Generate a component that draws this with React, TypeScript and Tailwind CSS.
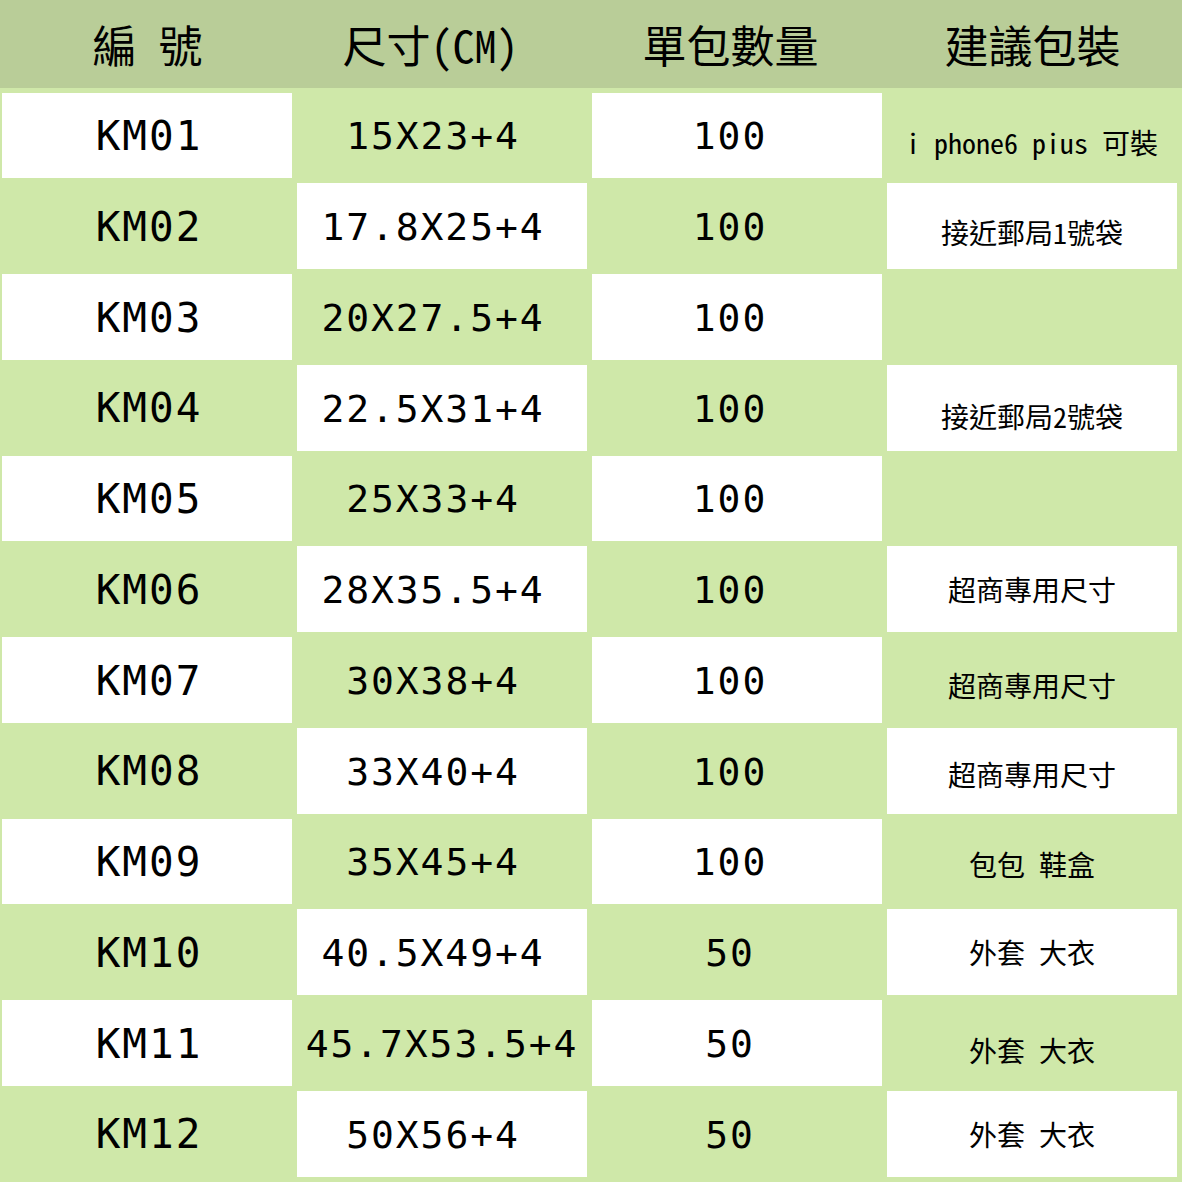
import React from 'react';

const rows: [string, string, string, string][] = [
  ['KM01', '15X23+4', '100', 'i phone6 pius 可裝'],
  ['KM02', '17.8X25+4', '100', '接近郵局1號袋'],
  ['KM03', '20X27.5+4', '100', ''],
  ['KM04', '22.5X31+4', '100', '接近郵局2號袋'],
  ['KM05', '25X33+4', '100', ''],
  ['KM06', '28X35.5+4', '100', '超商專用尺寸'],
  ['KM07', '30X38+4', '100', '超商專用尺寸'],
  ['KM08', '33X40+4', '100', '超商專用尺寸'],
  ['KM09', '35X45+4', '100', '包包 鞋盒'],
  ['KM10', '40.5X49+4', '50', '外套 大衣'],
  ['KM11', '45.7X53.5+4', '50', '外套 大衣'],
  ['KM12', '50X56+4', '50', '外套 大衣'],
];

// the last column's text sits a little low in some rows
const notePad = [
  'pt-[14px]',
  'pt-[12px]',
  '',
  'pt-[16px]',
  '',
  '',
  'pt-[10px]',
  'pt-[6px]',
  'pt-[6px]',
  '',
  'pt-[14px]',
  '',
];

const headers = ['編 號', '尺寸(CM)', '單包數量', '建議包裝'];

const code = "font-['DejaVu_Sans_Mono','Liberation_Mono',monospace] text-[41px] tracking-[2px] pl-[4px] pt-[3px]";
const mono = "font-['DejaVu_Sans_Mono','Liberation_Mono',monospace] text-[38px] tracking-[1.9px] pt-[3px]";
const cjk = "font-['Noto_Sans_Mono_CJK_TC','Noto_Sans_CJK_TC',sans-serif] text-[28px]";

export default function App() {
  return (
    <div className="w-[1182px] h-[1182px] bg-[#cfe8a9] text-black overflow-hidden">
      {/* header */}
      <div className="h-[88px] bg-[#b9cd98] grid grid-cols-[repeat(4,295px)]">
        {headers.map((h, j) => (
          <div
            key={h}
            className={`flex items-center justify-center font-['Noto_Sans_Mono_CJK_TC','Noto_Sans_CJK_TC',sans-serif] text-[44px] font-medium whitespace-pre ${
              j === 1 ? 'pr-[24px]' : j === 2 ? 'pr-[14px]' : ''
            }`}
          >
            {h}
          </div>
        ))}
      </div>

      {/* body */}
      <div className="pt-[2px]">
        {rows.map((r, i) => (
          <div key={r[0]} className="h-[90.75px] grid grid-cols-[repeat(4,295px)]">
            {r.map((cell, j) => {
              const white = (i + j) % 2 === 0;
              let font = mono;
              let pad = '';
              if (j === 0) font = code;
              if (j === 1 && r[0] !== 'KM11') pad = 'pr-[18px]';
              if (j === 2) pad = 'pr-[14px]';
              if (j === 3) {
                font = cjk;
                pad = notePad[i];
              }
              return (
                <div key={j} className="pl-[2px] pr-[3px] py-[2.5px] h-full">
                  <div
                    className={`h-full flex items-center justify-center whitespace-pre ${white ? 'bg-white' : ''} ${font} ${pad}`}
                  >
                    {cell}
                  </div>
                </div>
              );
            })}
          </div>
        ))}
      </div>
    </div>
  );
}
